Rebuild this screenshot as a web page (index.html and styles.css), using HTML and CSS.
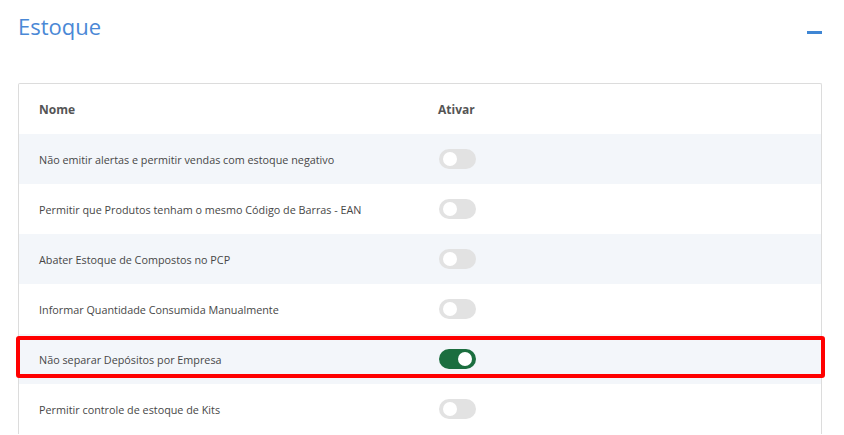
FILE: index.html
```html
<!DOCTYPE html>
<html lang="pt-BR">
<head>
<meta charset="utf-8">
<title>Estoque</title>
<link rel="stylesheet" href="styles.css">
</head>
<body>
<section class="panel">
  <header class="panel-head">
    <h1 class="panel-title">Estoque</h1>
    <span class="collapse-btn" aria-label="Recolher"></span>
  </header>
  <div class="card">
    <div class="row head">
      <div class="cell name">Nome</div>
      <div class="cell">Ativar</div>
    </div>
    <div class="row odd">
      <div class="cell name">Não emitir alertas e permitir vendas com estoque negativo</div>
      <div class="cell"><span class="toggle"></span></div>
    </div>
    <div class="row">
      <div class="cell name">Permitir que Produtos tenham o mesmo Código de Barras - EAN</div>
      <div class="cell"><span class="toggle"></span></div>
    </div>
    <div class="row odd">
      <div class="cell name">Abater Estoque de Compostos no PCP</div>
      <div class="cell"><span class="toggle"></span></div>
    </div>
    <div class="row">
      <div class="cell name">Informar Quantidade Consumida Manualmente</div>
      <div class="cell"><span class="toggle"></span></div>
    </div>
    <div class="row odd marked">
      <div class="cell name">Não separar Depósitos por Empresa</div>
      <div class="cell"><span class="toggle on"></span></div>
      <span class="highlight"></span>
    </div>
    <div class="row">
      <div class="cell name">Permitir controle de estoque de Kits</div>
      <div class="cell"><span class="toggle"></span></div>
    </div>
  </div>
</section>
</body>
</html>
```

FILE: styles.css
```css
* { box-sizing: border-box; }

html, body {
  margin: 0;
  padding: 0;
  background: #ffffff;
  font-family: "Open Sans", "Noto Sans", sans-serif;
  overflow: hidden;
}

.panel {
  padding: 0 22px 0 18px;
}

.panel-head {
  display: flex;
  align-items: center;
  justify-content: space-between;
  height: 83px;
  padding-bottom: 28px;
}

.panel-title {
  margin: 0 0 4px 0;
  font-size: 22px;
  font-weight: 400;
  color: #4a88d6;
  line-height: 30px;
}

.collapse-btn {
  display: block;
  width: 15px;
  height: 3px;
  background: #3f86d4;
  margin-top: 10px;
}

.card {
  border: 1px solid #dcdcdc;
  border-bottom: none;
  border-radius: 2px 2px 0 0;
}

.row {
  position: relative;
  display: grid;
  grid-template-columns: 419px 1fr;
  align-items: center;
  height: 50px;
  font-size: 10.8px;
  color: #474747;
}

.row.odd { background: #f3f6fa; }

.row.head {
  font-weight: 700;
  font-size: 12px;
  color: #555;
}

.cell.name { padding-left: 20px; }

.toggle {
  display: block;
  position: relative;
  width: 37px;
  height: 20px;
  border-radius: 10px;
  background: #e2e2e2;
  margin-left: 1px;
}

.toggle::after {
  content: "";
  position: absolute;
  top: 3px;
  left: 4px;
  width: 14px;
  height: 14px;
  border-radius: 50%;
  background: #ffffff;
}

.toggle.on { background: #1b6e3f; }
.toggle.on::after { left: 19px; }

.highlight {
  position: absolute;
  left: -3px;
  right: -4px;
  top: 2px;
  bottom: 6px;
  border: 4px solid #ff0000;
  border-radius: 3px;
  pointer-events: none;
}
```
